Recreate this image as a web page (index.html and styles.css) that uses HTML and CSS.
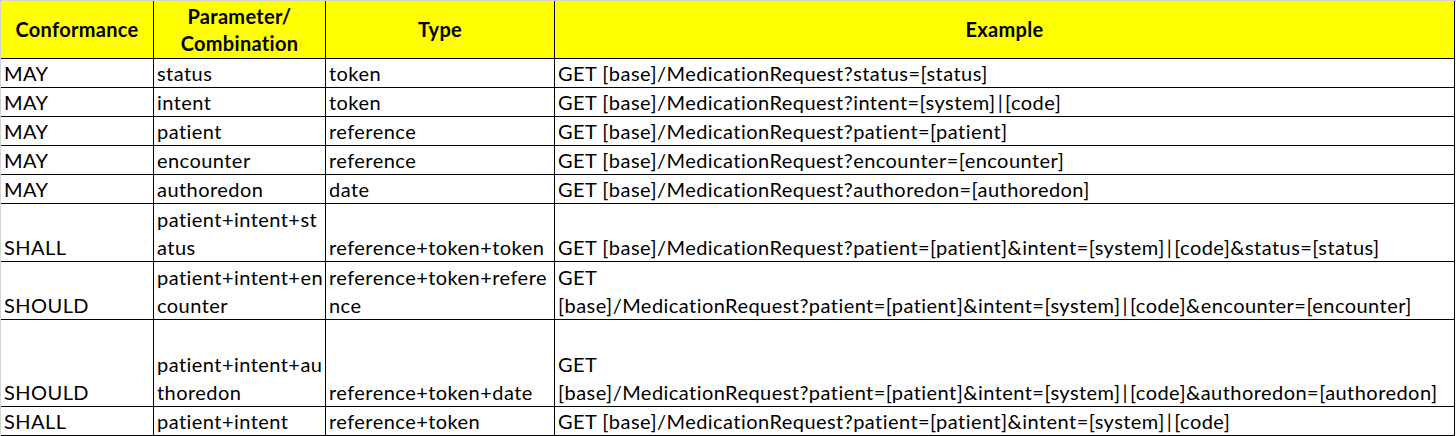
FILE: index.html
```html
<!DOCTYPE html>
<html>
<head>
<meta charset="utf-8">
<link rel="stylesheet" href="styles.css">
</head>
<body>
<div class="sheet">
  <div class="grid">
    <div class="cell head">Conformance</div>
    <div class="cell head">Parameter/<br>Combination</div>
    <div class="cell head">Type</div>
    <div class="cell head">Example</div>

    <div class="cell">MAY</div>
    <div class="cell">status</div>
    <div class="cell">token</div>
    <div class="cell">GET [base]/MedicationRequest?status=[status]</div>

    <div class="cell">MAY</div>
    <div class="cell">intent</div>
    <div class="cell">token</div>
    <div class="cell">GET [base]/MedicationRequest?intent=[system]<span class="pipe">|</span>[code]</div>

    <div class="cell">MAY</div>
    <div class="cell">patient</div>
    <div class="cell">reference</div>
    <div class="cell">GET [base]/MedicationRequest?patient=[patient]</div>

    <div class="cell">MAY</div>
    <div class="cell">encounter</div>
    <div class="cell">reference</div>
    <div class="cell">GET [base]/MedicationRequest?encounter=[encounter]</div>

    <div class="cell">MAY</div>
    <div class="cell">authoredon</div>
    <div class="cell">date</div>
    <div class="cell">GET [base]/MedicationRequest?authoredon=[authoredon]</div>

    <div class="cell">SHALL</div>
    <div class="cell">patient+intent+st<br>atus</div>
    <div class="cell">reference+token+token</div>
    <div class="cell">GET [base]/MedicationRequest?patient=[patient]&amp;intent=[system]<span class="pipe">|</span>[code]&amp;status=[status]</div>

    <div class="cell">SHOULD</div>
    <div class="cell">patient+intent+en<br>counter</div>
    <div class="cell">reference+token+refere<br>nce</div>
    <div class="cell">GET<br>[base]/MedicationRequest?patient=[patient]&amp;intent=[system]<span class="pipe">|</span>[code]&amp;encounter=[encounter]</div>

    <div class="cell">SHOULD</div>
    <div class="cell">patient+intent+au<br>thoredon</div>
    <div class="cell">reference+token+date</div>
    <div class="cell">GET<br>[base]/MedicationRequest?patient=[patient]&amp;intent=[system]<span class="pipe">|</span>[code]&amp;authoredon=[authoredon]</div>

    <div class="cell">SHALL</div>
    <div class="cell">patient+intent</div>
    <div class="cell">reference+token</div>
    <div class="cell">GET [base]/MedicationRequest?patient=[patient]&amp;intent=[system]<span class="pipe">|</span>[code]</div>
  </div>
</div>
</body>
</html>
```

FILE: styles.css
```css
html, body {
  margin: 0;
  padding: 0;
  background: #ffffff;
}

.sheet {
  width: 1456px;
  height: 436px;
  box-sizing: border-box;
  border-top: 1px solid #d4d4d4;
  border-left: 1px solid #d4d4d4;
}

.grid {
  display: grid;
  grid-template-columns: 153px 172px 229px 900px;
  grid-template-rows: 58px 29px 29px 29px 29px 29px 58px 58px 87px 29px;
  font-family: "Lato", "Liberation Sans", sans-serif;
  font-size: 20px;
  line-height: 28px;
  letter-spacing: 0.45px;
  font-variant-ligatures: none;
  color: #000000;
}

.cell {
  box-sizing: border-box;
  border-right: 1px solid #000000;
  border-bottom: 1px solid #000000;
  display: flex;
  align-items: flex-end;
  padding: 0 0 0 3px;
  white-space: nowrap;
  overflow: hidden;
}

.cell > .pipe {
  padding: 0 2px;
}

.head {
  background: #ffff00;
  font-weight: bold;
  justify-content: center;
  align-items: center;
  text-align: center;
  padding: 0;
  line-height: 27px;
  letter-spacing: 0.3px;
}
```
